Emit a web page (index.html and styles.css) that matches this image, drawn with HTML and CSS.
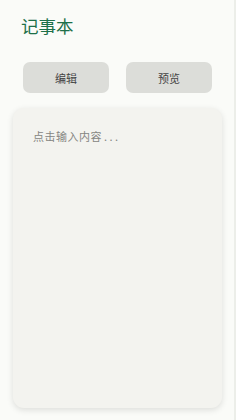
FILE: index.html
```html
<!DOCTYPE html>
<html lang="zh-CN">
<head>
    <meta charset="UTF-8">
    <meta name="viewport" content="width=device-width, initial-scale=1.0">
    <title>记事本</title>
    <link rel="stylesheet" href="styles.css">
</head>
<body>
    <div class="app">
        <h1 class="title">记事本</h1>
        <div class="toolbar">
            <button class="tab-btn">编辑</button>
            <button class="tab-btn">预览</button>
        </div>
        <div class="note-card">
            <p class="placeholder">点击输入内容<span class="dots">...</span></p>
        </div>
    </div>
</body>
</html>
```

FILE: styles.css
```css
body {
    margin: 0;
    font-family: "Noto Sans CJK SC", "Noto Sans", sans-serif;
    background-color: #fafbf8;
}
.app {
    height: 420px;
    box-sizing: border-box;
    border-right: 2px solid #eceee9;
    padding-top: 14px;
}
.title {
    margin: 0 0 0 21px;
    font-size: 17.5px;
    font-weight: normal;
    line-height: 24px;
    color: #1d7049;
}
.toolbar {
    display: flex;
    gap: 17px;
    padding: 0 22px 0 23px;
    margin-top: 24px;
}
.tab-btn {
    flex: 1;
    height: 31px;
    border: none;
    border-radius: 7px;
    background-color: #dcddd9;
    color: #444;
    font-family: inherit;
    font-size: 11px;
}
.note-card {
    margin: 15px 12px 0 13px;
    height: 300px;
    box-sizing: border-box;
    padding: 20px 20px;
    background-color: #f3f3ef;
    border-radius: 11px;
    box-shadow: 0 2px 6px rgba(0, 0, 0, 0.12);
}
.placeholder {
    margin: 0;
    font-size: 11px;
    color: #858582;
    letter-spacing: 0.5px;
}
.dots {
    margin-left: 2px;
    letter-spacing: 2.5px;
}
```
